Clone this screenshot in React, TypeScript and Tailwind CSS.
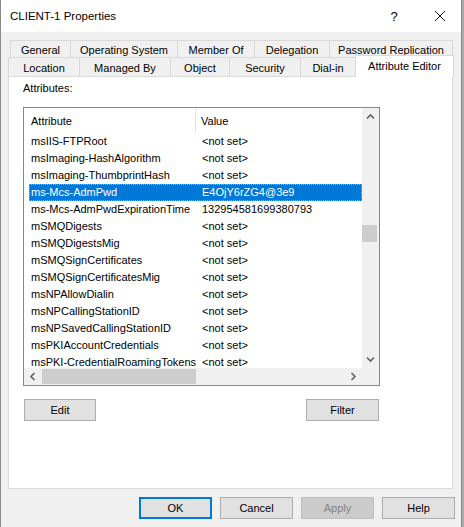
import { FC } from "react";

type attr = {
  name: string;
  value: string;
};

const attrs: attr[] = [
  { name: "msIIS-FTPRoot", value: "<not set>" },
  { name: "msImaging-HashAlgorithm", value: "<not set>" },
  { name: "msImaging-ThumbprintHash", value: "<not set>" },
  { name: "ms-Mcs-AdmPwd", value: "E4OjY6rZG4@3e9" },
  { name: "ms-Mcs-AdmPwdExpirationTime", value: "132954581699380793" },
  { name: "mSMQDigests", value: "<not set>" },
  { name: "mSMQDigestsMig", value: "<not set>" },
  { name: "mSMQSignCertificates", value: "<not set>" },
  { name: "mSMQSignCertificatesMig", value: "<not set>" },
  { name: "msNPAllowDialin", value: "<not set>" },
  { name: "msNPCallingStationID", value: "<not set>" },
  { name: "msNPSavedCallingStationID", value: "<not set>" },
  { name: "msPKIAccountCredentials", value: "<not set>" },
  { name: "msPKI-CredentialRoamingTokens", value: "<not set>" },
];

const SELECTED = 3;

const backTabs = [
  { label: "General", w: "w-[60px]" },
  { label: "Operating System", w: "w-[107px]" },
  { label: "Member Of", w: "w-[77px]" },
  { label: "Delegation", w: "w-[75px]" },
  { label: "Password Replication", w: "w-[124px]" },
];

const frontTabs = [
  { label: "Location", w: "w-[71px]" },
  { label: "Managed By", w: "w-[91px]" },
  { label: "Object", w: "w-[59px]" },
  { label: "Security", w: "w-[71px]" },
  { label: "Dial-in", w: "w-[55px]" },
];

const Chevron: FC<{ dir: "up" | "down" | "left" | "right" }> = ({ dir }) => {
  const rot = { up: 0, right: 90, down: 180, left: 270 }[dir];
  return (
    <svg width="9" height="9" viewBox="0 0 9 9" style={{ transform: `rotate(${rot}deg)` }}>
      <path d="M1 6.5 L4.5 3 L8 6.5" fill="none" stroke="#606060" strokeWidth="1.6" />
    </svg>
  );
};

const Button: FC<{ label: string; kind?: "default" | "disabled"; w?: string }> = ({
  label,
  kind,
  w = "w-[73px]",
}) => (
  <div
    className={
      "h-[22px] flex items-center justify-center " +
      w +
      " " +
      (kind === "default"
        ? "bg-[#e1e1e1] border-2 border-[#0078d7] text-black"
        : kind === "disabled"
        ? "bg-[#cccccc] border border-[#bfbfbf] text-[#838383]"
        : "bg-[#e1e1e1] border border-[#adadad] text-black")
    }
  >
    {label}
  </div>
);

const AttributeList: FC = () => (
  <div className="w-[357px] h-[279px] border border-[#828790] bg-white grid grid-cols-[338px_17px] grid-rows-[260px_17px]">
    {/* header + rows */}
    <div className="overflow-hidden">
      <div className="h-[25px] flex items-center pl-[5px] pt-[1px]">
        <div className="w-[167px] h-full pl-[2px] flex items-center border-r border-[#e5e5e5]">
          Attribute
        </div>
        <div className="pl-[5px]">Value</div>
      </div>
      {attrs.map((a, i) => (
        <div
          key={a.name}
          className={
            "ml-[5px] h-[17px] flex items-center whitespace-nowrap " +
            (i === SELECTED
              ? "bg-[#0078d7] text-white outline-1 outline-dotted outline-[#ff9a1f] -outline-offset-1"
              : "")
          }
        >
          <div className="w-[167px] pl-[2px]">{a.name}</div>
          <div className="pl-[6px]">{a.value}</div>
        </div>
      ))}
    </div>

    {/* vertical scrollbar */}
    <div className="bg-[#f0f0f0] flex flex-col items-center">
      <div className="h-[17px] w-full flex items-center justify-center">
        <Chevron dir="up" />
      </div>
      <div className="flex-1 w-full">
        <div className="mt-[100px] h-[17px] w-[15px] bg-[#cdcdcd]" />
      </div>
      <div className="h-[17px] w-full flex items-center justify-center">
        <Chevron dir="down" />
      </div>
    </div>

    {/* horizontal scrollbar */}
    <div className="bg-[#f0f0f0] flex items-center">
      <div className="w-[17px] h-full flex items-center justify-center">
        <Chevron dir="left" />
      </div>
      <div className="flex-1 h-full flex items-center">
        <div className="ml-[1px] w-[154px] h-[15px] bg-[#cdcdcd]" />
      </div>
      <div className="w-[17px] h-full flex items-center justify-center">
        <Chevron dir="right" />
      </div>
    </div>
    <div className="bg-[#f0f0f0]" />
  </div>
);

export default function App() {
  return (
    <div
      className="w-[464px] h-[527px] flex bg-[#a9a9a9] text-[11px] leading-[15px] text-black"
      style={{ fontFamily: '"Liberation Sans", Arial, sans-serif' }}
    >
      <div className="w-[462px] h-full border-l border-r border-[#8a8a8a] bg-[#f0f0f0] flex flex-col">
        {/* title bar */}
        <div className="h-[32px] bg-white flex items-center shrink-0">
          <span className="ml-[9px] text-[11.5px] flex-1">CLIENT-1 Properties</span>
          <span className="w-[20px] text-center text-[13px] mr-[31px]">?</span>
          <svg width="10" height="10" viewBox="0 0 10 10" className="mr-[16px]">
            <path d="M0 0 L10 10 M10 0 L0 10" stroke="#111" strokeWidth="1" />
          </svg>
        </div>

        {/* tab strip */}
        <div className="mt-[8px] pl-[9px] flex">
          {backTabs.map((t) => (
            <div
              key={t.label}
              className={
                "h-[17px] border-t border-l border-[#d9d9d9] flex items-center justify-center pt-[2px] last:border-r " +
                t.w
              }
            >
              {t.label}
            </div>
          ))}
        </div>
        <div className="pl-[7px] flex items-end h-[19px]">
          {frontTabs.map((t) => (
            <div
              key={t.label}
              className={
                "h-[19px] border-t border-l border-[#d9d9d9] flex items-center justify-center pt-[2px] " +
                t.w
              }
            >
              {t.label}
            </div>
          ))}
          <div className="relative z-10 w-[99px] h-[22px] -mb-px bg-white border-t border-x border-[#d9d9d9] flex items-center justify-center pb-[1px]">
            Attribute Editor
          </div>
        </div>

        {/* page */}
        <div className="ml-[7px] w-[445px] h-[413px] bg-white border border-[#d9d9d9] flex flex-col pl-[14px]">
          <div className="mt-[4px] h-[15px]">Attributes:</div>
          <div className="mt-[11px]">
            <AttributeList />
          </div>
          <div className="mt-[13px] flex w-[357px] justify-between pl-[1px] pr-[1px]">
            <Button label="Edit" w="w-[72px]" />
            <Button label="Filter" />
          </div>
        </div>

        {/* dialog buttons */}
        <div className="mt-[8px] pl-[138px] flex gap-[8px]">
          <Button label="OK" kind="default" />
          <Button label="Cancel" />
          <Button label="Apply" kind="disabled" />
          <Button label="Help" />
        </div>
      </div>
    </div>
  );
}
